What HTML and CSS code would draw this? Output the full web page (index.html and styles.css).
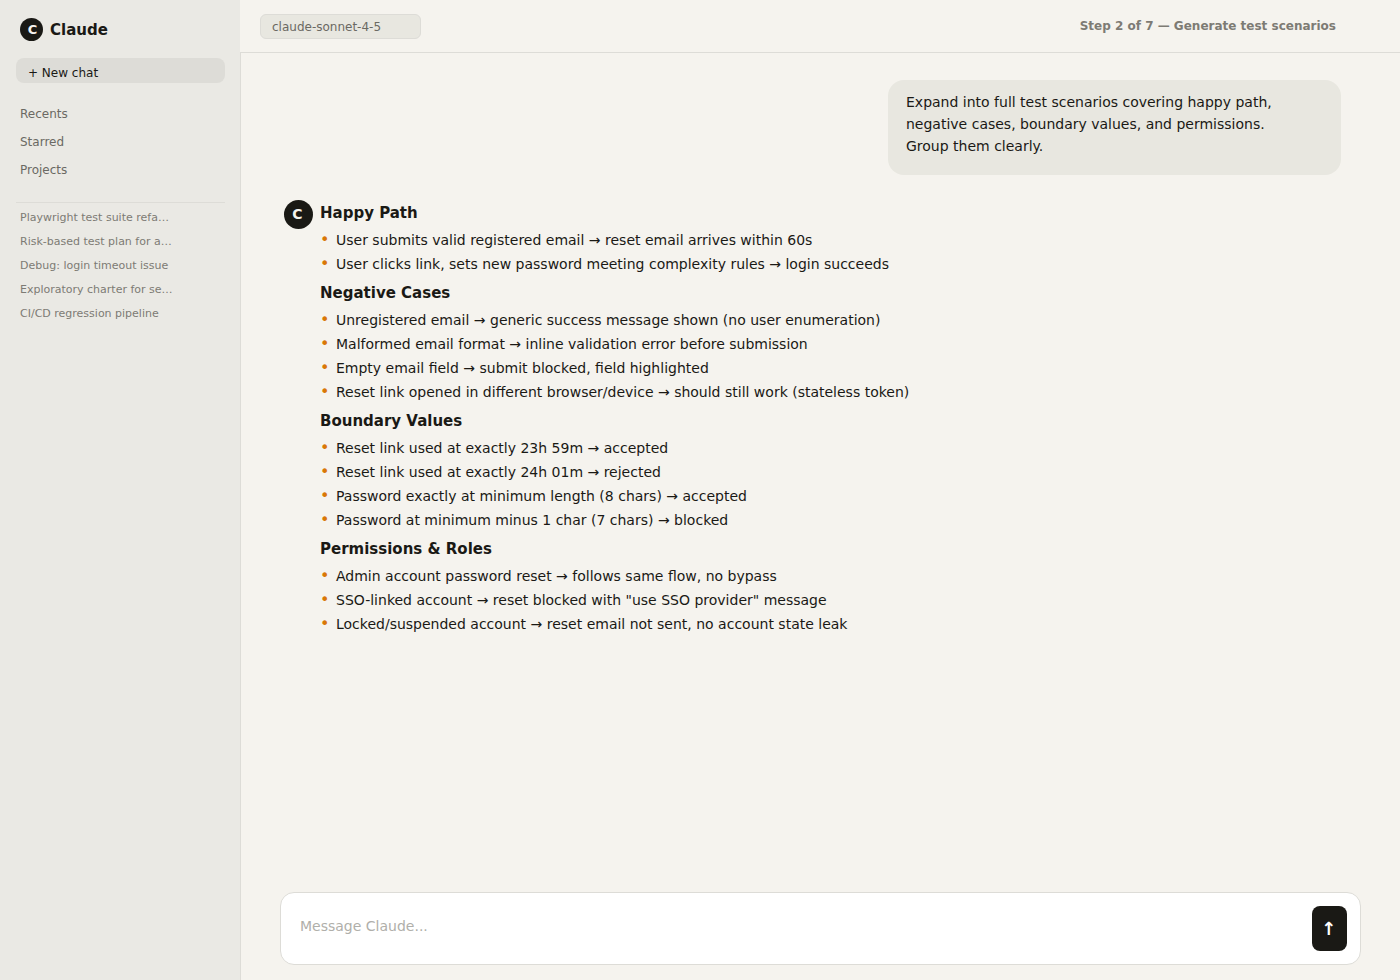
FILE: index.html
```html
<!DOCTYPE html>
<html lang="en">
<head>
    <meta charset="UTF-8">
    <meta name="viewport" content="width=device-width, initial-scale=1.0">
    <title>Claude</title>
    <link rel="stylesheet" href="styles.css">
</head>
<body>

    <!-- Sidebar -->
    <aside class="sidebar">
        <div class="brand">
            <span class="logo">C</span>
            <span class="brand-name">Claude</span>
        </div>
        <button type="button" class="new-chat">+ New chat</button>
        <nav class="nav">
            <a href="#recents">Recents</a>
            <a href="#starred">Starred</a>
            <a href="#projects">Projects</a>
        </nav>
        <nav class="history" aria-label="Recent chats">
            <a href="#chat1">Playwright test suite refa…</a>
            <a href="#chat2">Risk-based test plan for a…</a>
            <a href="#chat3">Debug: login timeout issue</a>
            <a href="#chat4">Exploratory charter for se…</a>
            <a href="#chat5">CI/CD regression pipeline</a>
        </nav>
    </aside>

    <div class="main">
        <header class="topbar">
            <button type="button" class="model">claude-sonnet-4-5</button>
            <span class="step">Step 2 of 7 — Generate test scenarios</span>
        </header>

        <main class="chat">
            <div class="user-message">
                Expand into full test scenarios covering happy path, negative cases, boundary values, and permissions. Group them clearly.
            </div>

            <div class="reply">
                <span class="avatar">C</span>
                <div class="reply-body">
                    <h2>Happy Path</h2>
                    <ul>
                        <li>User submits valid registered email → reset email arrives within 60s</li>
                        <li>User clicks link, sets new password meeting complexity rules → login succeeds</li>
                    </ul>
                    <h2>Negative Cases</h2>
                    <ul>
                        <li>Unregistered email → generic success message shown (no user enumeration)</li>
                        <li>Malformed email format → inline validation error before submission</li>
                        <li>Empty email field → submit blocked, field highlighted</li>
                        <li>Reset link opened in different browser/device → should still work (stateless token)</li>
                    </ul>
                    <h2>Boundary Values</h2>
                    <ul>
                        <li>Reset link used at exactly 23h 59m → accepted</li>
                        <li>Reset link used at exactly 24h 01m → rejected</li>
                        <li>Password exactly at minimum length (8 chars) → accepted</li>
                        <li>Password at minimum minus 1 char (7 chars) → blocked</li>
                    </ul>
                    <h2>Permissions &amp; Roles</h2>
                    <ul>
                        <li>Admin account password reset → follows same flow, no bypass</li>
                        <li>SSO-linked account → reset blocked with "use SSO provider" message</li>
                        <li>Locked/suspended account → reset email not sent, no account state leak</li>
                    </ul>
                </div>
            </div>

            <form class="composer">
                <input type="text" class="composer-input" placeholder="Message Claude..." aria-label="Message Claude">
                <button type="button" class="send" aria-label="Send message">↑</button>
            </form>
        </main>
    </div>

</body>
</html>
```

FILE: styles.css
```css
* {
    box-sizing: border-box;
}

body {
    margin: 0;
    min-height: 100vh;
    display: flex;
    font-family: 'DejaVu Sans', sans-serif;
    font-size: 14px;
    color: #1a1915;
    background-color: #f5f3ee;
}

a {
    color: inherit;
    text-decoration: none;
}

button,
input {
    font-family: inherit;
}

button {
    cursor: pointer;
}

/* Sidebar */
.sidebar {
    width: 240px;
    flex-shrink: 0;
    padding: 18px 15px 18px 16px;
    background-color: #eae9e4;
}

.brand {
    display: flex;
    align-items: flex-start;
    gap: 7px;
    padding-left: 4px;
    margin-bottom: 16px;
}

.brand-name {
    padding-top: 1px;
    font-size: 15px;
    font-weight: bold;
    line-height: 23px;
}

.logo,
.avatar {
    display: flex;
    align-items: center;
    justify-content: center;
    flex-shrink: 0;
    border-radius: 50%;
    background-color: #1a1915;
    color: #f5f3ee;
    font-weight: bold;
}

.logo {
    width: 23px;
    height: 23px;
    padding-left: 2px;
    font-size: 13px;
}

.new-chat {
    display: block;
    width: 100%;
    height: 25px;
    padding: 5px 12px 0;
    border: none;
    border-radius: 8px;
    background-color: #dddcd7;
    color: inherit;
    font-size: 12px;
    text-align: left;
}

.nav {
    padding: 17px 4px 18px;
    border-bottom: 1px solid #dddcd7;
    font-size: 12px;
    color: #6b6963;
}

.nav a {
    display: block;
    line-height: 28px;
}

.history {
    padding: 3px 4px;
    font-size: 11px;
    color: #7d7b74;
}

.history a {
    display: block;
    line-height: 24px;
}

/* Main column */
.main {
    flex: 1;
    min-width: 0;
    display: flex;
    flex-direction: column;
}

.topbar {
    display: flex;
    align-items: center;
    justify-content: space-between;
    height: 53px;
    padding: 0 64px 0 20px;
    border-bottom: 1px solid #dddcd7;
    font-size: 12px;
}

.model {
    min-width: 161px;
    height: 25px;
    padding: 2px 11px 0;
    border: 1px solid #dddcd7;
    border-radius: 6px;
    background-color: #e8e7e0;
    color: #6b6963;
    font-size: 12px;
    text-align: left;
}

.step {
    font-weight: bold;
    color: #7d7b74;
}

.chat {
    flex: 1;
    display: flex;
    flex-direction: column;
    padding: 27px 39px 15px;
    border-left: 1px solid #dddcd7;
}

.user-message {
    align-self: flex-end;
    max-width: 453px;
    margin-right: 20px;
    padding: 11px 60px 18px 18px;
    border-radius: 16px;
    background-color: #e8e7e0;
    line-height: 22px;
}

.reply {
    display: flex;
    gap: 7px;
    padding: 21px 0 40px 4px;
}

.avatar {
    width: 29px;
    height: 29px;
    margin-top: 4px;
    padding: 0 2px 2px 0;
    font-size: 14px;
}

.reply-body h2 {
    margin: 0;
    padding-top: 2px;
    font-size: 15px;
    line-height: 30px;
}

.reply-body ul {
    margin: 0;
    padding: 0;
    list-style: none;
}

.reply-body li {
    display: flex;
    line-height: 24px;
}

.reply-body li::before {
    content: "•";
    width: 16px;
    flex-shrink: 0;
    font-size: 16px;
    color: #d97706;
}

/* Message box */
.composer {
    display: flex;
    align-items: center;
    margin-top: auto;
    padding: 13px;
    border: 1px solid #dddcd7;
    border-radius: 14px;
    background-color: #fff;
}

.composer-input {
    flex: 1;
    min-width: 0;
    height: 45px;
    padding: 0 6px 6px;
    border: none;
    outline: none;
    background: none;
    color: inherit;
    font-size: 14px;
}

.composer-input::placeholder {
    color: #b0afaa;
}

.send {
    width: 35px;
    height: 45px;
    padding: 0 2px 0 0;
    border: none;
    border-radius: 8px;
    background-color: #1a1915;
    color: #fff;
    font-size: 18px;
    font-weight: bold;
}
```
